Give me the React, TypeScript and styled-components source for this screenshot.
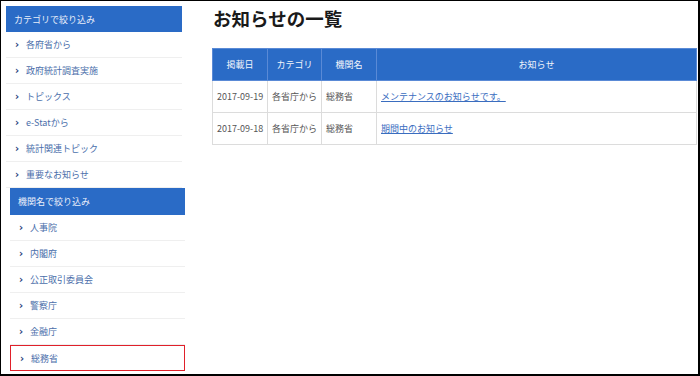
import React from 'react';
import styled, {createGlobalStyle} from 'styled-components';

const GlobalStyle = createGlobalStyle`
  html, body {
    margin: 0;
    padding: 0;
    background: #fff;
    font-family: "Noto Sans CJK JP", "Liberation Sans", sans-serif;
  }
`;

const Frame = styled.div`
  box-sizing: border-box;
  width: 700px;
  height: 376px;
  border-top: 1px solid #000;
  border-left: 1px solid #000;
  border-right: 2px solid #000;
  border-bottom: 2px solid #000;
  display: flex;
  padding: 5px 1px 0 5px;
  overflow: hidden;
`;

const Sidebar = styled.aside`
  width: 179px;
  flex-shrink: 0;
  display: flex;
  flex-direction: column;
`;

const Group = styled.div<{$indent: number; $trim: number}>`
  display: flex;
  flex-direction: column;
  margin-left: ${p => p.$indent}px;
  margin-right: ${p => p.$trim}px;
`;

const GroupHeader = styled.div<{$h: number}>`
  height: ${p => p.$h}px;
  background: #2a6bc6;
  color: #e8eefa;
  font-size: 9px;
  display: flex;
  align-items: center;
  padding-left: 8px;
`;

const Item = styled.div<{$pad: number; $marked?: boolean}>`
  box-sizing: border-box;
  height: 26px;
  display: flex;
  align-items: center;
  padding-left: ${p => p.$pad}px;
  font-size: 9px;
  color: #4a6eaa;
  border-bottom: 1px solid ${p => (p.$marked ? '#e0202a' : '#efefef')};
  border-top: ${p => (p.$marked ? '1px solid #e0202a' : 'none')};
  border-left: ${p => (p.$marked ? '1px solid #e0202a' : 'none')};
  border-right: ${p => (p.$marked ? '1px solid #e0202a' : 'none')};
`;

const Chevron = styled.span`
  display: inline-block;
  width: 11px;
  color: #1d3f7a;
  font-weight: bold;
  font-size: 10px;
  font-family: "DejaVu Sans", sans-serif;
`;

const Main = styled.main`
  flex: 1;
  margin-left: 27px;
  display: flex;
  flex-direction: column;
`;

const Title = styled.h1`
  margin: 0 0 0 1px;
  font-size: 18.5px;
  font-weight: bold;
  color: #1a1a1a;
  line-height: 24px;
  height: 42px;
`;

const Table = styled.table`
  border-collapse: collapse;
  width: 485px;
  table-layout: fixed;
  font-size: 9px;
`;

const Th = styled.th<{$w?: number}>`
  width: ${p => (p.$w ? `${p.$w}px` : 'auto')};
  height: 31px;
  padding: 0;
  background: #2a6bc6;
  color: #f2f5fb;
  font-weight: normal;
  text-align: center;
  border: 1px solid #5a8ad6;
`;

const Td = styled.td<{$center?: boolean}>`
  height: 31px;
  padding: 0 4px;
  color: #555;
  border: 1px solid #dcdcdc;
  text-align: ${p => (p.$center ? 'center' : 'left')};
  white-space: nowrap;
`;

const Link = styled.a`
  color: #3a6dbf;
  text-decoration: underline;
  cursor: pointer;
`;

const categories = ['各府省から', '政府統計調査実施', 'トピックス', 'e-Statから', '統計関連トピック', '重要なお知らせ'];
const agencies = ['人事院', '内閣府', '公正取引委員会', '警察庁', '金融庁', '総務省'];

const news = [
  {date: '2017-09-19', category: '各省庁から', agency: '総務省', title: 'メンテナンスのお知らせです。'},
  {date: '2017-09-18', category: '各省庁から', agency: '総務省', title: '期間中のお知らせ'},
];

export default () => {
  return <>
    <GlobalStyle/>
    <Frame>
      <Sidebar>
        <Group $indent={0} $trim={3}>
          <GroupHeader $h={26}>カテゴリで絞り込み</GroupHeader>
          {categories.map(c => <Item key={c} $pad={9}>
            <Chevron>›</Chevron>{c}
          </Item>)}
        </Group>
        <Group $indent={4} $trim={0}>
          <GroupHeader $h={27}>機関名で絞り込み</GroupHeader>
          {agencies.map((a, i) => <Item key={a} $pad={9} $marked={i === agencies.length - 1}>
            <Chevron>›</Chevron>{a}
          </Item>)}
        </Group>
      </Sidebar>
      <Main>
        <Title>お知らせの一覧</Title>
        <Table>
          <thead>
            <tr>
              <Th $w={54}>掲載日</Th>
              <Th $w={53}>カテゴリ</Th>
              <Th $w={54}>機関名</Th>
              <Th>お知らせ</Th>
            </tr>
          </thead>
          <tbody>
            {news.map((n, i) => <tr key={i}>
              <Td $center>{n.date}</Td>
              <Td $center>{n.category}</Td>
              <Td>{n.agency}</Td>
              <Td><Link>{n.title}</Link></Td>
            </tr>)}
          </tbody>
        </Table>
      </Main>
    </Frame>
  </>;
};
